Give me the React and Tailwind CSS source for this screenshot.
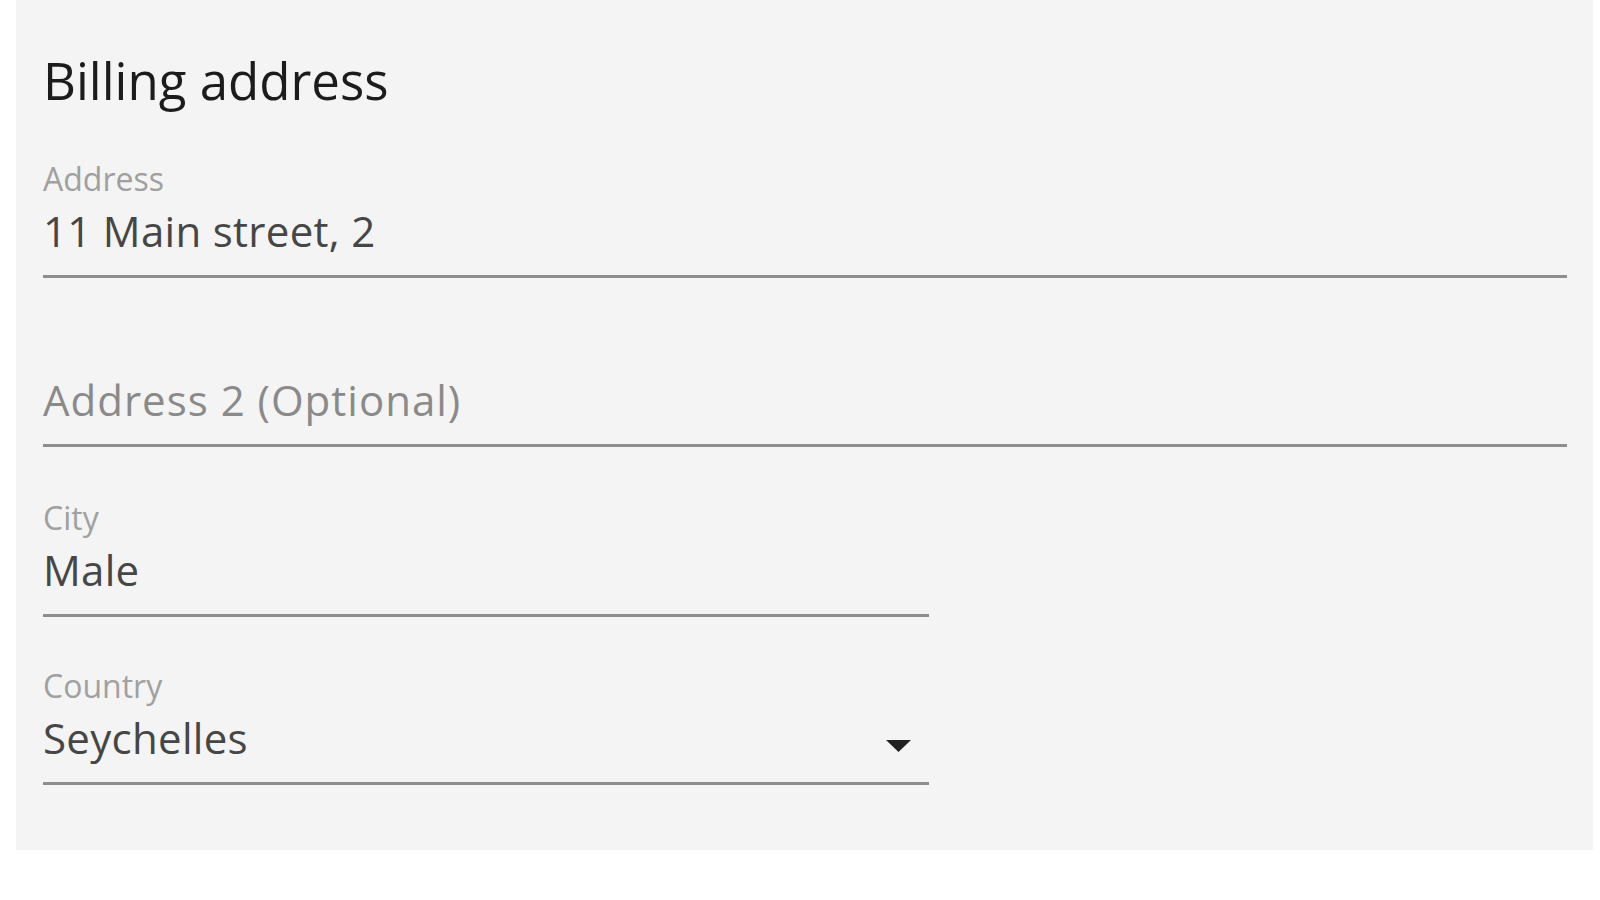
import React from "react";

const font = { fontFamily: '"Open Sans", "Liberation Sans", sans-serif' };

function Field({ label, value, placeholder, narrow, select, top = "pt-[53px]" }) {
  return (
    <div className={`${top} pb-[20px] border-b-[3px] border-[#8e8e8e] ${narrow ? "w-[886px]" : "w-full"}`}>
      <div className="h-[32px] text-[32px] leading-[32px] text-[#a0a0a0]">{label || ""}</div>
      <div className="mt-[12px] flex items-start justify-between">
        <div
          className={`h-[48px] text-[42px] leading-[48px] tracking-[0.3px] ${
            value ? "text-[#464646]" : "text-[#8a8a8a] tracking-[1px]"
          }`}
        >
          {value || placeholder}
        </div>
        {select && (
          <svg width="25" height="12" viewBox="0 0 25 12" className="mt-[26px] mr-[18px]">
            <polygon points="0,0 25,0 12.5,12" fill="#222222" />
          </svg>
        )}
      </div>
    </div>
  );
}

export default function App() {
  return (
    <div className="min-h-screen bg-white" style={font}>
      <div className="ml-[16px] w-[1577px] h-[850px] bg-[#f4f4f4] pl-[27px] pr-[26px] pt-[50px]">
        <h2 className="text-[51px] leading-[60px] font-normal text-[#1c1c1c]">Billing address</h2>
        <Field label="Address" value="11 Main street, 2" />
        <Field placeholder="Address 2 (Optional)" top="pt-[54px]" />
        <Field label="City" value="Male" narrow top="pt-[55px]" />
        <Field label="Country" value="Seychelles" narrow select />
      </div>
    </div>
  );
}
